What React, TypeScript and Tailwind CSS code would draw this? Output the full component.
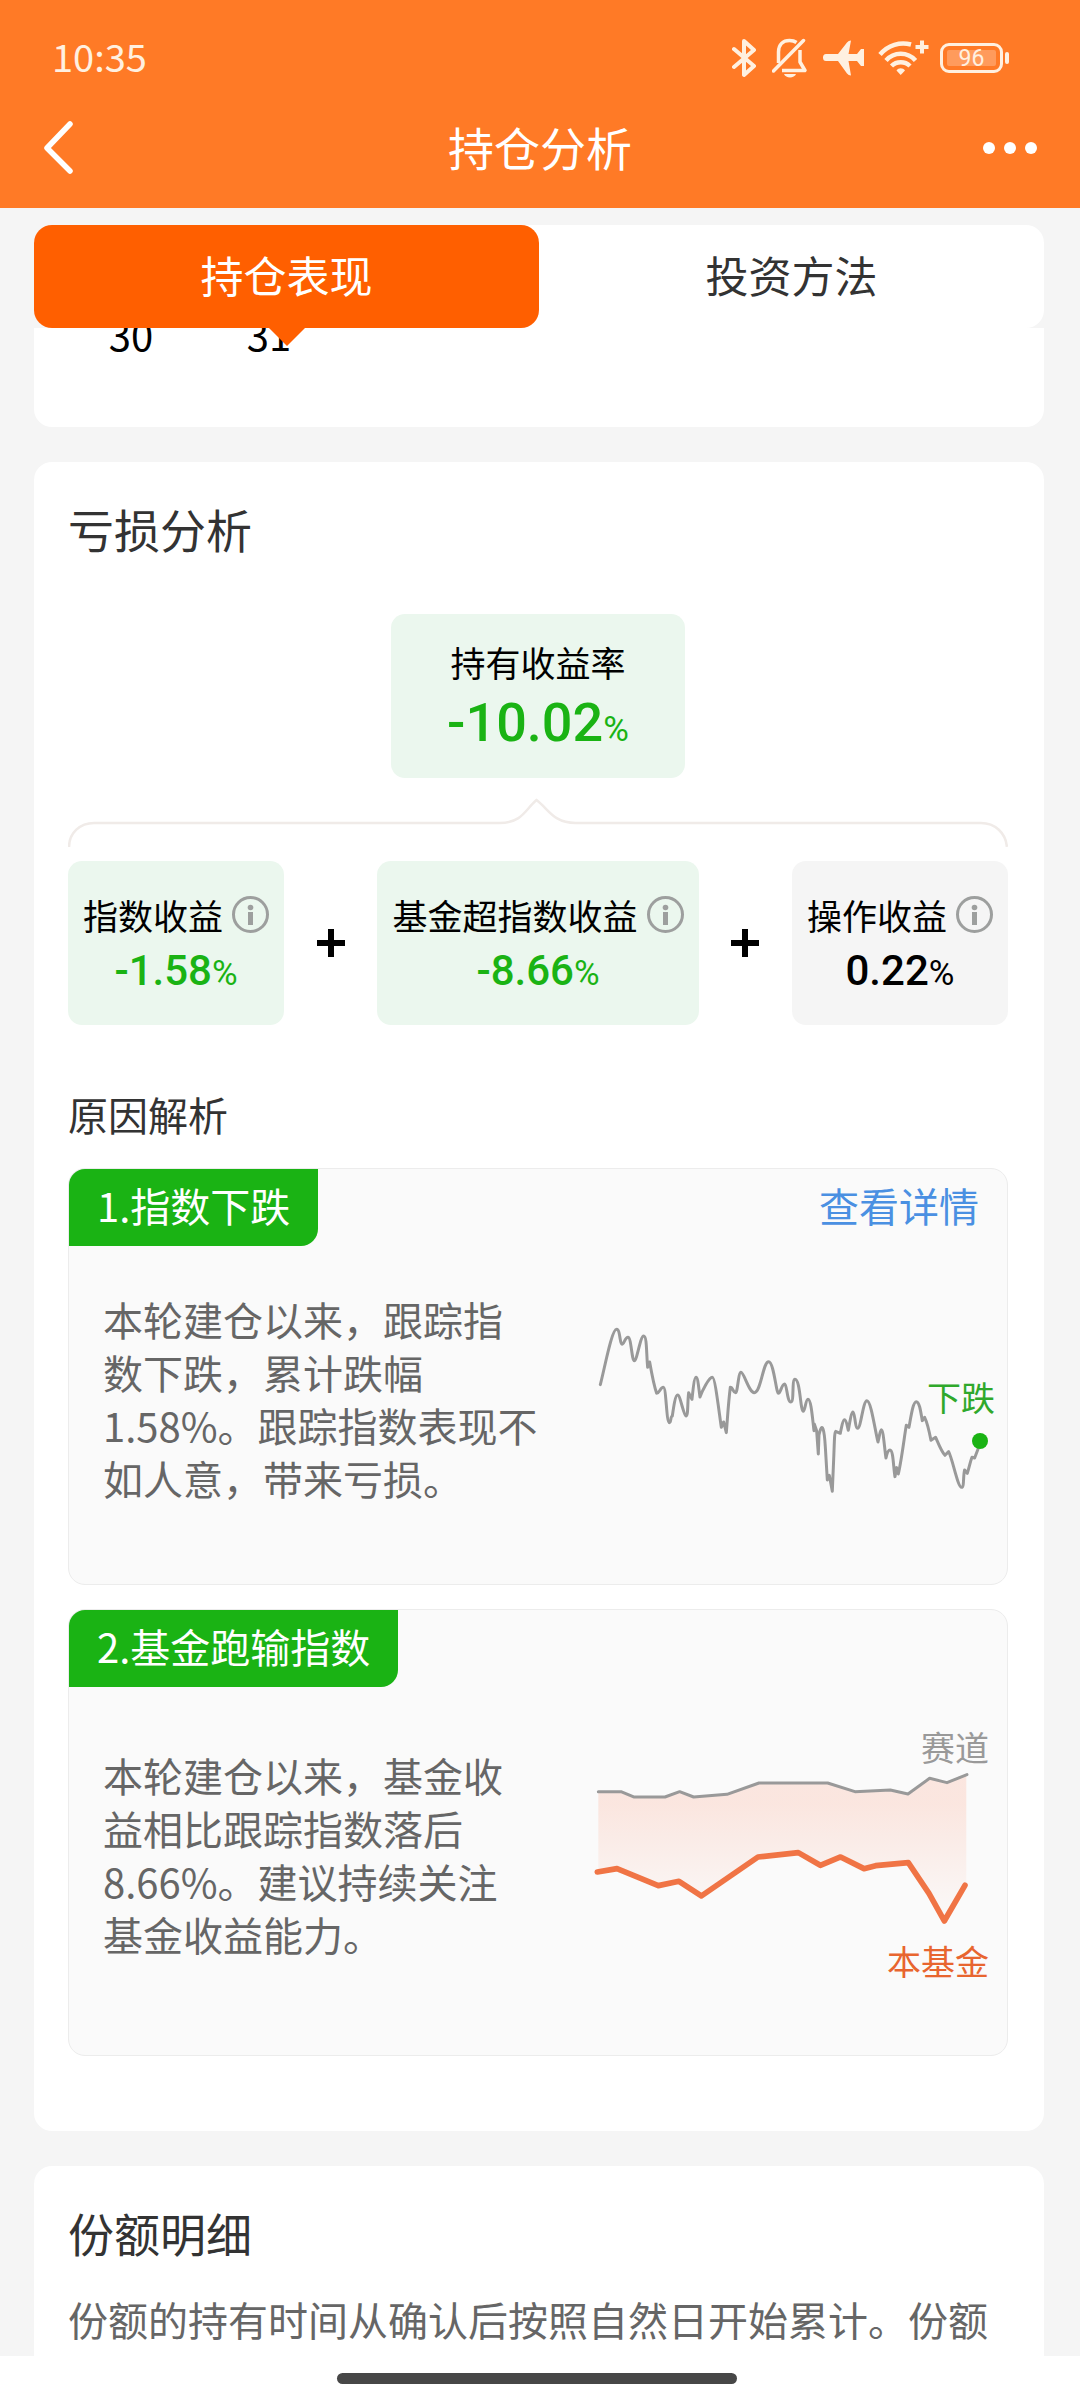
import type { ReactNode } from "react";

const StatusIcons = () => (
  <div className="flex items-center text-[#fff0e0]">
    <svg width="24" height="40" viewBox="0 0 24 40" className="mr-4" fill="none" stroke="currentColor" strokeWidth="4" strokeLinecap="round" strokeLinejoin="round">
      <path d="M2 11 22 28 12 37V3L22 12 2 29" />
    </svg>
    <svg width="36" height="40" viewBox="0 0 36 40" className="mr-[15px]" fill="none" stroke="currentColor" strokeWidth="3.5">
      <path d="M6.5 25V14C6.5 6.500 11 2.500 17.500 2.500 20 2.500 22.500 3 24.500 4.500" />
      <path d="M28 12V24L33 32.500H10" strokeLinejoin="round" />
      <path d="M1.500 33 31.500 2.500" strokeLinecap="round" />
      <path d="M12 36H24C22.500 40.500 13.500 40.500 12 36Z" fill="currentColor" stroke="none" />
    </svg>
    <svg width="41" height="38" viewBox="0 0 41 38" className="mr-[14px]" fill="currentColor">
      <path d="M3 15H15L24 3.500Q25.500 1.500 28 1.500L25.500 15H34L38 10H41V27H38L34 22H25.500L28 36.500Q25.500 36.500 24 34.500L15 22H3Q0 22 0 18.500 0 15 3 15Z" />
    </svg>
    <svg width="51" height="38" viewBox="0 0 51 38" className="mr-[11px]" fill="none" stroke="currentColor" strokeWidth="4.5">
      <path d="M2 15.500C10 6 22 2.500 33 5.500" />
      <path d="M8 21.500C16 12.500 29.500 12.500 37.500 21.500" />
      <path d="M13.500 27C18.500 22 27 22 32 27" />
      <path d="M18.500 31.500C20.500 28.500 25 28.500 27 31.500L22.700 36Z" fill="currentColor" stroke="none" />
      <path d="M44 1.500V14.500M37.500 8H50.500" strokeWidth="4" />
    </svg>
    <div className="flex items-center">
      <div className="w-[63px] h-[30px] p-1 border-3 border-current rounded-[9px]">
        <div className="h-full flex items-center justify-center bg-white/25 rounded-[2px] font-[Roboto,sans-serif] text-[23px] leading-none">
          96
        </div>
      </div>
      <div className="w-1 h-3 ml-[2px] bg-current rounded-full" />
    </div>
  </div>
);

const Header = () => (
  <header className="pt-7 bg-[#ff7a26] text-white">
    <div className="h-[60px] pl-[52px] pr-[71px] flex items-center justify-between">
      <span className="pb-1 text-[38px] leading-none text-[#fff0e0]">10:35</span>
      <StatusIcons />
    </div>
    <nav className="h-[120px] px-[43px] grid grid-cols-3 items-center">
      <button type="button" aria-label="返回" className="justify-self-start">
        <svg width="32" height="56" viewBox="0 0 32 56" fill="none" stroke="currentColor" strokeWidth="5.5" strokeLinecap="round" strokeLinejoin="round">
          <path d="M27 4 4 28 27 51" />
        </svg>
      </button>
      <h1 className="pb-1 text-[46px] leading-[64px] text-center">持仓分析</h1>
      <button type="button" aria-label="更多" className="justify-self-end flex gap-x-[9px]">
        <span className="size-3 rounded-full bg-white" />
        <span className="size-3 rounded-full bg-white" />
        <span className="size-3 rounded-full bg-white" />
      </button>
    </nav>
  </header>
);

const Tabs = () => (
  <div role="tablist" className="relative z-10 h-[103px] mt-[17px] grid grid-cols-2 bg-white rounded-[18px] text-[43px]">
    <button type="button" role="tab" aria-selected="true" className="relative pb-1 bg-[#ff5f00] text-white rounded-[18px]">
      持仓表现
      <svg width="36" height="18" viewBox="0 0 36 18" className="absolute top-full left-1/2 -translate-x-1/2" fill="#ff5f00">
        <path d="M0 0H36L18 18Z" />
      </svg>
    </button>
    <button type="button" role="tab" aria-selected="false" className="pb-1 text-[#333]">
      投资方法
    </button>
  </div>
);

const Info = () => (
  <button type="button" aria-label="说明" className="ml-[9px]">
    <svg width="37" height="37" viewBox="0 0 37 37" fill="none" stroke="#9d9f9e">
      <circle cx="18.500" cy="18.500" r="17" strokeWidth="3" />
      <circle cx="18.500" cy="11.500" r="2.800" fill="#9d9f9e" stroke="none" />
      <path d="M18.500 16V29" strokeWidth="5" />
    </svg>
  </button>
);

const Plus = () => (
  <svg width="28" height="28" viewBox="0 0 28 28" stroke="#000" strokeWidth="6">
    <path d="M14 0V28M0 14H28" />
  </svg>
);

const Factor = ({ label, value, tone }: { label: string; value: string; tone: string }) => (
  <div className={`h-[164px] px-[15px] pt-8 rounded-[14px] flex flex-col items-center ${tone}`}>
    <div className="h-11 flex items-center text-[35px] text-black">
      {label}
      <Info />
    </div>
    <p className="font-[Roboto,sans-serif] text-[42px] leading-[68px] font-medium">
      {value}
      <span className="text-[35px] font-normal">%</span>
    </p>
  </div>
);

const Reason = ({ title, text, link, children }: { title: string; text: string; link?: string; children: ReactNode }) => (
  <article className="border border-[#ececec] bg-[#fafafa] rounded-[17px] overflow-hidden">
    <div className="flex items-center justify-between">
      <h4 className="h-[77px] px-7 pb-1 flex items-center bg-[#1ab314] text-white text-[40px] rounded-br-[17px]">
        {title}
      </h4>
      {link && (
        <a href="#detail" className="pr-7 pb-1 text-[40px] text-[#4a90e2]">
          {link}
        </a>
      )}
    </div>
    <div className="pl-[34px] pr-2 pb-7 flex items-center justify-between">
      <p className="mb-1 text-[40px] leading-[53px] text-[#666] whitespace-pre-line">{text}</p>
      {children}
    </div>
  </article>
);

const IndexChart = () => (
  <svg width="410" height="310" viewBox="0 0 410 310" className="shrink-0">
    <g transform="translate(-30 -106) scale(0.3333)" fill="none" stroke="#999" strokeWidth="9" strokeLinecap="round" strokeLinejoin="round">
      <path d="M124 734C138 680 158 568 173 568C184 568 182 613 189 613C195 613 198 592 207 592C217 592 218 662 226 662C234 662 244 588 254 588C264 588 262 640 266 682L272 666C278 700 286 740 293 760C302 760 304 742 313 742C322 742 322 848 331 848C337 848 334 828 340 828C344 800 349 765 356 765C364 765 374 828 381 828C388 828 385 790 389 758L399 778C402 750 406 712 411 712C417 712 419 745 423 771C430 752 450 712 460 712C468 712 478 800 487 862L494 846L502 878C506 830 508 790 514 742C522 742 522 758 530 758C536 758 538 697 546 697C555 697 570 758 586 758C606 758 612 665 629 665C644 665 652 760 658 760C665 760 668 732 677 732C684 732 684 786 696 786C706 786 698 718 708 718C724 718 724 814 733 814C738 814 740 778 747 778C756 778 760 830 765 872L766 852L773 872L778 942L780 885C790 840 796 870 799 920L805 1020L811 1006L820 1054L824 960C826 920 826 874 830 874L844 880C848 860 852 839 857 839C862 839 864 855 868 871C872 850 877 816 882 816C888 816 888 865 896 865C906 865 912 782 924 782C936 782 948 870 957 906C962 890 963 869 967 869C973 869 976 920 981 954C984 940 988 930 993 930C1003 930 1003 980 1008 1010L1013 983L1018 1002C1028 960 1036 890 1042 856L1050 862C1056 830 1062 785 1072 785C1082 785 1086 820 1090 842L1097 832C1106 850 1112 880 1116 901L1130 892C1138 910 1148 936 1158 946L1169 935C1182 960 1196 1042 1208 1042C1216 1042 1212 1010 1217 990L1225 1000C1230 985 1234 965 1239 952L1247 954L1257 928" />
    </g>
    <circle cx="391" cy="195" r="8" fill="#1ab314" />
    <text x="406" y="165" textAnchor="end" fontSize="34" fill="#2fa82b">
      下跌
    </text>
  </svg>
);

const FundChart = () => (
  <svg width="410" height="340" viewBox="0 0 410 340" className="shrink-0">
    <defs>
      <linearGradient id="gap" x1="0" y1="0" x2="0" y2="1">
        <stop offset="0.200" stopColor="#ff5f2d" stopOpacity="0.130" />
        <stop offset="0.900" stopColor="#ff5f2d" stopOpacity="0.020" />
      </linearGradient>
    </defs>
    <g transform="translate(-30 -97) scale(0.3333)" fill="none" strokeLinecap="round" strokeLinejoin="round">
      <path fill="url(#gap)" d="M118 605H186L224 621H318L362 605 404 621 504 613 600 579H806L888 605 994 600 1047 612 1112 565 1164 578 1222 555V886L1156 995 1110 910 1048 818 950 827 915 836 845 801 784 826 718 788 597 801 427 918 360 874 298 887 174 836 118 845Z" />
      <path stroke="#999" strokeWidth="9" d="M118 605H186L224 621H318L362 605 404 621 504 613 600 579H806L888 605 994 600 1047 612 1112 565 1164 578 1224 554" />
      <path stroke="#f07445" strokeWidth="17" d="M115 846 174 836 298 887 360 874 427 918 597 801 718 788 784 826 845 801 915 836 950 827 1048 818 1110 910 1156 993 1218 886" />
    </g>
    <text x="400" y="74" textAnchor="end" fontSize="34" fill="#999">
      赛道
    </text>
    <text x="400" y="288" textAnchor="end" fontSize="34" fill="#e8652f">
      本基金
    </text>
  </svg>
);

const LossAnalysis = () => (
  <section className="mt-[35px] pt-[34px] pb-[75px] pl-[34px] pr-9 bg-white rounded-[18px]">
    <h2 className="text-[46px] leading-[64px] text-[#333]">亏损分析</h2>
    <div className="w-[294px] h-[164px] mt-[54px] mx-auto pt-[22px] bg-[#ebf7ee] rounded-[14px] flex flex-col items-center">
      <span className="text-[35px] leading-[52px] text-black">持有收益率</span>
      <p className="font-[Roboto,sans-serif] text-[54px] leading-[70px] font-medium text-[#1ab314]">
        -10.02
        <span className="text-[35px] font-normal">%</span>
      </p>
    </div>
    <svg viewBox="0 0 941 50" className="w-full mt-5 mb-[13px]" fill="none" stroke="#f0ebe8" strokeWidth="2.500">
      <path d="M1 49C1 35 12 25 26 25H432C455 25 458 11 469 2 481 11 486 25 508 25H914C928 25 939 35 940 49" />
    </svg>
    <div className="flex items-center justify-between">
      <Factor label="指数收益" value="-1.58" tone="bg-[#ebf7ee] text-[#1ab314]" />
      <Plus />
      <Factor label="基金超指数收益" value="-8.66" tone="bg-[#ebf7ee] text-[#1ab314]" />
      <Plus />
      <Factor label="操作收益" value="0.22" tone="bg-[#f5f5f5] text-black" />
    </div>
    <h3 className="mt-[59px] mb-6 text-[40px] leading-[60px] text-[#333]">原因解析</h3>
    <div className="flex flex-col gap-y-6">
      <Reason
        title="1.指数下跌"
        link="查看详情"
        text={"本轮建仓以来，跟踪指\n数下跌，累计跌幅\n1.58%。跟踪指数表现不\n如人意，带来亏损。"}
      >
        <IndexChart />
      </Reason>
      <Reason
        title="2.基金跑输指数"
        text={"本轮建仓以来，基金收\n益相比跟踪指数落后\n8.66%。建议持续关注\n基金收益能力。"}
      >
        <FundChart />
      </Reason>
    </div>
  </section>
);

export default function App() {
  return (
    <div className="min-h-screen flex flex-col bg-[#f5f5f5] font-['Noto_Sans_CJK_SC',sans-serif]">
      <Header />
      <main className="flex-1 flex flex-col pl-[34px] pr-9">
        <Tabs />
        {/* last calendar row, scrolled under the tabs */}
        <div className="h-[99px] pl-7 pr-4 bg-white rounded-b-[18px] overflow-hidden">
          <div className="-mt-3.5 grid grid-cols-7 text-center text-[40px] leading-[40px] text-black">
            <span>30</span>
            <span>31</span>
          </div>
        </div>
        <LossAnalysis />
        <section className="flex-1 mt-[35px] pt-[34px] pb-[5px] pl-[34px] pr-9 bg-white rounded-t-[18px]">
          <h2 className="text-[46px] leading-[64px] text-[#333]">份额明细</h2>
          <p className="mt-[25px] text-[40px] leading-[60px] text-[#666]">
            份额的持有时间从确认后按照自然日开始累计。份额
          </p>
        </section>
      </main>
      <footer className="h-11 pr-1.5 flex items-center justify-center bg-white">
        <div className="w-[400px] h-[11px] rounded-full bg-[#474747]" />
      </footer>
    </div>
  );
}
